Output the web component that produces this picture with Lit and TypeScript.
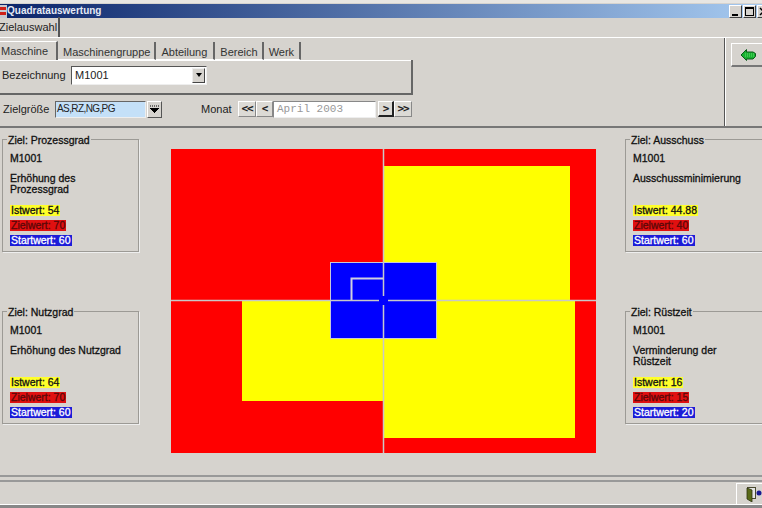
import { LitElement, html, css, svg } from "lit";
import { customElement } from "lit/decorators.js";

interface Goal { title: string; lines: string[]; ist: string; ziel: string; start: string; }

const left: Goal[] = [
  { title: "Ziel: Prozessgrad", lines: ["Erhöhung des", "Prozessgrad"], ist: "54", ziel: "70", start: "60" },
  { title: "Ziel: Nutzgrad", lines: ["Erhöhung des Nutzgrad"], ist: "64", ziel: "70", start: "60" },
];
const right: Goal[] = [
  { title: "Ziel: Ausschuss", lines: ["Ausschussminimierung"], ist: "44.88", ziel: "40", start: "60" },
  { title: "Ziel: Rüstzeit", lines: ["Verminderung der", "Rüstzeit"], ist: "16", ziel: "15", start: "20" },
];

@customElement("app-root")
export class AppRoot extends LitElement {
  static styles = css`
    :host { display: block; width: 762px; height: 508px; overflow: hidden; background: #d6d3ce; color: #222;
      font-family: "Liberation Sans", Arial, sans-serif; font-size: 11px; }
    * { box-sizing: border-box; }
    .frame { height: 508px; display: flex; flex-direction: column; border-top: 3px solid #e8e6e2; padding-top: 1px; }
    .titlebar { height: 14px; flex: none; display: flex; align-items: center; background: linear-gradient(90deg, #0a246a, #a6caf0);
      font-size: 10px; line-height: 14px; }
    .appicon { width: 7px; height: 13px; flex: none; }
    .title { flex: 1; color: #e4e9f4; font-weight: bold; }
    .winbtns { display: flex; gap: 1px; height: 13px; margin-right: -8px; }
    .winbtn { width: 13px; height: 13px; background: #d6d3ce; border: 1px solid; border-color: #fff #404040 #404040 #fff; display: flex; align-items: center; justify-content: center; }
    .pagetabs { height: 20px; flex: none; display: flex; align-items: flex-end; border-bottom: 1px solid #fff; }
    .pagetab { height: 20px; width: 60px; padding-top: 3px; text-indent: -1px; line-height: 14px; border-right: 2px solid #555; overflow: hidden; white-space: nowrap; }
    .top { height: 90px; flex: none; display: flex; border-bottom: 2px solid #777; }
    .topmain { flex: 1; padding-top: 3px; min-width: 0; }
    .side { width: 38px; flex: none; border-left: 1px solid #555; box-shadow: inset 1px 0 0 #fff; padding: 5px 0 0 6px; }
    .backbtn { width: 40px; height: 24px; border-top: 1px solid #fff; border-left: 1px solid #fff; border-bottom: 2px solid #777; display: flex; align-items: center; padding-left: 9px; }
    .tabs { display: flex; height: 19px; }
    .tab { padding: 4px 4px 0 5px; line-height: 13px; color: #333; border-right: 2px solid #666; border-bottom: 1px solid #fff; white-space: nowrap; margin-top: 1px; height: 18px; }
    .tab.on { width: 58px; padding: 3px 0 0 1px; margin-top: 0; height: 19px; border-bottom: 0; border-top: 1px solid #fff; }
    .tab.wide { padding-right: 6px; }
    .tab.last { padding-right: 5px; }
    .panel { width: 413px; height: 35px; border-right: 2px solid #666; border-bottom: 2px solid #666; display: flex; align-items: center; padding: 0 0 3px 2px; box-shadow: inset 0 1px 0 #fff; }
    .panel .lbl { width: 69px; }
    .combo { width: 136px; height: 19px; background: #fff; border: 1px solid; border-color: #555 #eee #eee #555; display: flex; align-items: center; padding-left: 3px; }
    .combo span { flex: 1; }
    .arrow { width: 13px; height: 15px; background: #d6d3ce; border: 1px solid; border-color: #eee #444 #444 #eee; display: flex; align-items: center; justify-content: center; margin-right: 1px; }
    .tri { width: 0; height: 0; border: 3px solid transparent; border-top: 4px solid #000; border-bottom: 0; }
    .filter { display: flex; align-items: center; height: 18px; margin-top: 5px; padding-left: 3px; }
    .filter .lbl1 { width: 52px; }
    .multi { width: 91px; height: 17px; background: #c4e0f8; border: 1px solid; border-color: #666 #eee #eee #666; font-size: 10px; line-height: 13px; padding-left: 1px; letter-spacing: -0.6px; }
    .multibtn { width: 15px; height: 17px; margin-left: 1px; border: 1px solid; border-color: #fff #555 #555 #fff; display: flex; align-items: center; justify-content: center; }
    .monat { margin-left: 39px; width: 37px; }
    .nav { width: 18px; height: 16px; border: 1px solid; border-color: #fff #888 #888 #fff; font-weight: bold; font-size: 11px; line-height: 13px; text-align: center; font-family: "DejaVu Sans Mono", monospace; letter-spacing: -1px; background: #dcdad5; }
    .nav.single { width: 17px; }
    .nav.pressed { width: 16px; border-color: #fff #222 #222 #fff; border-width: 1px 2px 2px 1px; margin-left: 2px; }
    .date { width: 103px; height: 17px; background: #fff; border: 1px solid; border-color: #888 #eee #eee #888; font-family: "Liberation Mono", monospace; color: #999; line-height: 15px; padding-left: 3px; }
    .body { flex: 1; display: grid; grid-template-columns: 171px 425px 166px; min-height: 0; }
    .col { display: flex; flex-direction: column; gap: 59px; padding-top: 11px; }
    .col.l { padding-left: 2px; }
    .col.r { padding-left: 29px; }
    .group { position: relative; width: 137px; height: 113px; border: 1px solid #9c9a95; padding: 12px 0 0 7px; box-shadow: 1px 1px 0 #eee; font-size: 10.500px; -webkit-text-stroke: 0.3px currentColor; color: #111; }
    .r .group { width: 140px; }
    .legend { position: absolute; top: -6px; left: 4px; background: #d6d3ce; padding: 0 1px; line-height: 12px; white-space: nowrap; }
    .m { line-height: 13px; }
    .desc { height: 33px; margin-top: 7px; line-height: 11px; padding-top: 1px; }
    .val { display: table; padding: 0 1px; height: 11px; line-height: 11px; margin-bottom: 4px; white-space: nowrap; }
    .ist { background: #ffff2a; color: #111; }
    .ziel { background: #e01010; color: #5a0808; }
    .start { background: #1c1cd8; color: #fff; }
    .chart { padding-top: 21px; }
    .chart svg { display: block; }
    .foot2 { height: 5px; flex: none; border-top: 2px solid #999; }
    .foot { height: 24px; flex: none; border-top: 2px solid #999; display: flex; justify-content: flex-end; padding-top: 1px; }
    .exit { width: 26px; height: 22px; border-left: 1px solid #fff; border-top: 1px solid #fff; border-bottom: 1px solid #888; display: flex; align-items: center; padding-left: 9px; }
    .bottom { height: 4px; flex: none; border-top: 1px solid #fff; background: #888; }
  `;

  private box(g: Goal) {
    return html`<div class="group">
      <div class="legend">${g.title}</div>
      <div class="m">M1001</div>
      <div class="desc">${g.lines.map((l) => html`${l}<br />`)}</div>
      <div class="val ist">Istwert: ${g.ist}</div>
      <div class="val ziel">Zielwert: ${g.ziel}</div>
      <div class="val start">Startwert: ${g.start}</div>
    </div>`;
  }

  render() {
    return html`<div class="frame">
      <div class="titlebar">
        <svg class="appicon" viewBox="0 0 7 13"><rect width="7" height="13" fill="#c8c8d0"/><rect x="0" y="2" width="6" height="3" fill="#d02018"/><rect x="0" y="7" width="6" height="3" fill="#d02018"/></svg>
        <span class="title">Quadratauswertung</span>
        <div class="winbtns">
          <div class="winbtn"><svg width="9" height="9"><rect x="1" y="7" width="6" height="2" fill="#000"/></svg></div>
          <div class="winbtn"><svg width="9" height="9"><rect x=".5" y=".5" width="8" height="8" fill="none" stroke="#000"/><rect x="0" y="0" width="9" height="2" fill="#000"/></svg></div>
          <div class="winbtn"><svg width="9" height="9"><path d="M1 1l7 7M8 1l-7 7" stroke="#000" stroke-width="1.5"/></svg></div>
        </div>
      </div>
      <div class="pagetabs"><div class="pagetab">Zielauswahl</div></div>
      <div class="top">
        <div class="topmain">
          <div class="tabs">
            <div class="tab on">Maschine</div><div class="tab">Maschinengruppe</div><div class="tab wide">Abteilung</div><div class="tab">Bereich</div><div class="tab last">Werk</div>
          </div>
          <div class="panel"><span class="lbl">Bezeichnung</span>
            <div class="combo"><span>M1001</span><div class="arrow"><div class="tri"></div></div></div>
          </div>
          <div class="filter">
            <span class="lbl1">Zielgröße</span>
            <div class="multi">AS,RZ,NG,PG</div>
            <div class="multibtn"><svg width="9" height="9"><path d="M0 1h1M2 1h1M4 1h1M6 1h1M8 1h1" stroke="#000"/><path d="M0 3.5h9M1 4.5h7M2 5.5h5M3 6.5h3M4 7.5h1" stroke="#000"/></svg></div>
            <span class="monat">Monat</span>
            <div class="nav">&lt;&lt;</div><div class="nav single">&lt;</div>
            <div class="date">April 2003</div>
            <div class="nav pressed">&gt;</div><div class="nav">&gt;&gt;</div>
          </div>
        </div>
        <div class="side">
          <div class="backbtn"><svg width="15" height="12" viewBox="0 0 15 12"><path d="M0 6 5.500.5V3H12l2.500 1.500v3L12 10H5.500v1.500z" fill="#18b030" stroke="#0a5a1a" stroke-width="1"/><path d="M4 5h9M4 7h9" stroke="#60e070" stroke-width="1" stroke-dasharray="1 1"/></svg></div>
        </div>
      </div>
      <div class="body">
        <div class="col l">${left.map((g) => this.box(g))}</div>
        <div class="chart">
          <svg width="425" height="304" viewBox="171 149 425 304">
            ${svg`<rect x="171" y="149" width="425" height="304" fill="#ff0000"/>
            <rect x="384" y="166" width="186" height="134" fill="#ffff00"/>
            <rect x="242" y="300" width="142" height="101" fill="#ffff00"/>
            <rect x="384" y="300" width="191" height="138" fill="#ffff00"/>
            <rect x="330.500" y="262.500" width="106" height="76" fill="#0000ff" stroke="#c8c8d8"/>
            <path d="M351.500 300V278.500H383" fill="none" stroke="#d0d0e0" stroke-width="2"/>
            <path d="M171 300.500H379M388 300.500H596M383.500 149V296M383.500 305V453" stroke="#c8c8c8" stroke-width="1.500" fill="none"/>`}
          </svg>
        </div>
        <div class="col r">${right.map((g) => this.box(g))}</div>
      </div>
      <div class="foot2"></div>
      <div class="foot">
        <div class="exit"><svg width="16" height="15" viewBox="0 0 16 15"><rect x="1.500" y=".5" width="8" height="11" fill="#e4e4e4" stroke="#4a4a30"/><path d="M1 1l5 2v12l-5-3z" fill="#5a6a18" stroke="#2e3410" stroke-width=".8"/><circle cx="13" cy="6" r="2.500" fill="#1a1a90"/></svg></div>
      </div>
      <div class="bottom"></div>
    </div>`;
  }
}
